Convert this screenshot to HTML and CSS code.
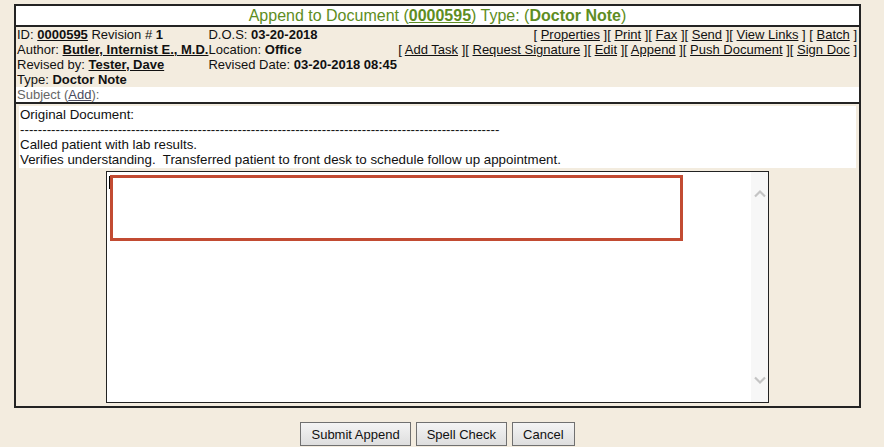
FILE: index.html
```html
<!DOCTYPE html>
<html>
<head>
<meta charset="utf-8">
<link rel="stylesheet" href="styles.css">
</head>
<body>
<div class="doc">
  <div class="title">Append to Document (<a class="tlink">0000595</a>) Type: (<b>Doctor Note</b>)</div>
  <div class="meta">
    <div>ID: <a class="blink">0000595</a> Revision # <b>1</b></div>
    <div>D.O.S: <b>03-20-2018</b></div>
    <div class="links">[ <a>Properties</a> ][ <a>Print</a> ][ <a>Fax</a> ][ <a>Send</a> ][ <a>View Links</a> ] [ <a>Batch</a> ]</div>
    <div>Author: <a class="blink">Butler, Internist E., M.D.</a></div>
    <div>Location: <b>Office</b></div>
    <div class="links">[ <a>Add Task</a> ][ <a>Request Signature</a> ][ <a>Edit</a> ][ <a>Append</a> ][ <a>Push Document</a> ][ <a>Sign Doc</a> ]</div>
    <div>Revised by: <a class="blink">Tester, Dave</a></div>
    <div>Revised Date: <b>03-20-2018 08:45</b></div>
    <div></div>
    <div>Type: <b>Doctor Note</b></div>
    <div></div>
    <div></div>
  </div>
  <div class="subject">Subject (<a>Add</a>):</div>
  <div class="body">
    <div class="orig">
      <div>Original Document:</div>
      <div>------------------------------------------------------------------------------------------------------------</div>
      <div>Called patient with lab results.</div>
      <div>Verifies understanding.&nbsp; Transferred patient to front desk to schedule follow up appointment.</div>
    </div>
    <div class="editor">
      <div class="area"><span class="caret"></span></div>
      <div class="scroll">
        <svg width="12" height="9" viewBox="0 0 12 9"><path d="M1 7.5 L6 2.5 L11 7.5" fill="none" stroke="#c4c4c4" stroke-width="2.2"/></svg>
        <svg width="12" height="9" viewBox="0 0 12 9"><path d="M1 1.5 L6 6.5 L11 1.5" fill="none" stroke="#c4c4c4" stroke-width="2.2"/></svg>
      </div>
      <div class="mark"></div>
    </div>
  </div>
</div>
<div class="actions">
  <button class="btn">Submit Append</button>
  <button class="btn">Spell Check</button>
  <button class="btn">Cancel</button>
</div>
</body>
</html>
```

FILE: styles.css
```css
html, body {
  margin: 0;
  padding: 0;
  background: #f3ecdf;
  font-family: "Liberation Sans", Arial, sans-serif;
  font-size: 13px;
  color: #111;
}
.doc {
  margin: 4px 0 0 14px;
  width: 843px;
  border: 2px solid #232323;
}
.title {
  height: 19px;
  line-height: 19px;
  background: #fff;
  color: #5e8d22;
  font-size: 16px;
  text-align: center;
  border-bottom: 2px solid #232323;
}
.title .tlink {
  font-weight: bold;
  text-decoration: underline;
}
.meta {
  display: grid;
  grid-template-columns: auto auto 1fr;
  line-height: 15px;
  padding: 0 2px 0 1px;
  white-space: nowrap;
}
.meta a {
  color: #111;
  text-decoration: underline;
}
.meta .blink {
  font-weight: bold;
}
.links {
  text-align: right;
}
.subject {
  background: #fff;
  color: #666;
  line-height: 15px;
  padding-left: 1px;
  border-bottom: 2px solid #232323;
}
.subject a {
  color: #4a4a5e;
  text-decoration: underline;
}
.body {
  padding: 2px 3px 3px;
}
.orig {
  background: #fff;
  font-size: 13.33px;
  line-height: 15px;
  padding: 1px 1px 1px;
  height: 60px;
  white-space: nowrap;
  overflow: hidden;
}
.editor {
  position: relative;
  margin: 3px auto 0;
  width: 661px;
  height: 230px;
  border: 1px solid #222;
  background: #fff;
  display: flex;
}
.area {
  flex: 1;
  position: relative;
}
.caret {
  position: absolute;
  left: 2px;
  top: 4px;
  width: 1px;
  height: 13px;
  background: #000;
}
.scroll {
  width: 17px;
  background: #f7f7f7;
  display: flex;
  flex-direction: column;
  justify-content: space-between;
  align-items: center;
  padding: 17px 0 17px;
}
.scroll svg {
  display: block;
}
.mark {
  position: absolute;
  left: 3px;
  top: 3px;
  width: 567px;
  height: 60px;
  border: 3px solid #c24b32;
}
.actions {
  display: flex;
  justify-content: center;
  gap: 5px;
  margin: 14px 0 0 14px;
  width: 847px;
}
.btn {
  height: 24px;
  padding: 0 10px;
  font-family: "Liberation Sans", Arial, sans-serif;
  font-size: 13px;
  color: #111;
  background: linear-gradient(#f4f4f4, #dedede);
  border: 1px solid #707070;
  border-radius: 0;
}
```
